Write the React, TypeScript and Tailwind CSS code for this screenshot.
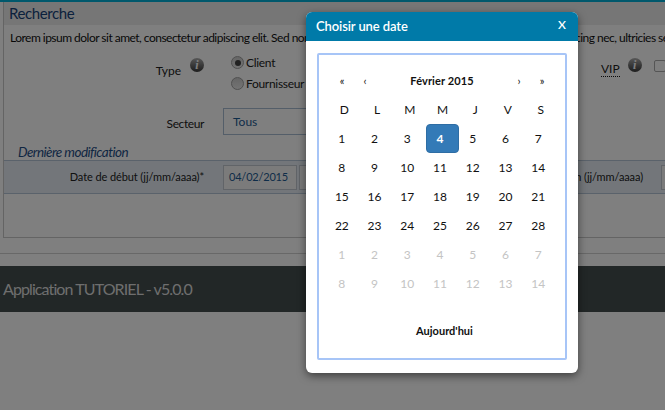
const week = ["D", "L", "M", "M", "J", "V", "S"];
const days = Array.from({ length: 28 }, (_, i) => i + 1);
const next = [1, 2, 3, 4, 5, 6, 7, 8, 9, 10, 11, 12, 13, 14];

function Info() {
  return (
    <span className="flex h-[14px] w-[14px] items-center justify-center rounded-full bg-gradient-to-b from-[#b0b0b0] to-[#3c3c3c] font-['Liberation_Serif',serif] text-[12px] font-bold italic leading-none text-white">
      i
    </span>
  );
}

function Radio({ checked }: { checked?: boolean }) {
  return (
    <span className="flex h-[13px] w-[13px] shrink-0 items-center justify-center rounded-full border border-[#a0a0a0] bg-gradient-to-b from-[#cccccc] to-[#e8e8e8]">
      {checked && <span className="h-[6px] w-[6px] rounded-full bg-[#444444]" />}
    </span>
  );
}

export default function App() {
  return (
    <div className="relative h-[410px] w-[665px] overflow-hidden bg-white font-['Lato',sans-serif] text-[12px] text-[#222222]">
      <div className="h-[2px] bg-[#00b0d8]" />
      <div className="ml-[3px] h-[236px] w-[720px] border border-t-0 border-[#c8c8c8]">
        <div className="flex h-[23px] items-center bg-[#ececec] pl-[5px] text-[15px] leading-none tracking-[-0.4px] text-[#16427a]">
          Recherche
        </div>
        <div className="flex h-[25px] items-center overflow-hidden whitespace-nowrap pl-[6px] text-[12px] tracking-[-0.52px] text-[#111111]">
          Lorem ipsum dolor sit amet, consectetur adipiscing elit. Sed non risus Suspendisse lectus tortor dignissim sit amet, adipiscing nec, ultricies sed, dolor.
        </div>
        <div className="flex h-[57px] shrink-0">
          <div className="flex w-[177px] shrink-0 justify-end pt-[12px]">Type</div>
          <div className="ml-[9px] shrink-0 pt-[8px]"><Info /></div>
          <div className="ml-[27px] flex w-[90px] shrink-0 flex-col gap-[6px] pt-[5px] tracking-[-0.3px]">
            <label className="flex h-[15px] items-center gap-[2px]"><Radio checked />Client</label>
            <label className="flex h-[15px] items-center gap-[2px]"><Radio />Fournisseur</label>
          </div>
          <div className="ml-[280px] shrink-0 pt-[10px]">
            <span className="border-b border-dotted border-[#111111] text-[12px] leading-none">VIP</span>
          </div>
          <div className="ml-[8px] shrink-0 pt-[8px]"><Info /></div>
          <div className="ml-[12px] shrink-0 pt-[10px]">
            <span className="block h-[12px] w-[12px] rounded-[2px] border border-[#aaaaaa] bg-white" />
          </div>
        </div>
        <div className="flex h-[29px] items-center">
          <div className="w-[200px] shrink-0 pt-[5px] text-right tracking-[-0.4px]">Secteur</div>
          <div className="ml-[19px] flex h-[27px] w-[300px] shrink-0 items-center border border-[#a9bdd2] bg-white pl-[9px] text-[#1d5a92]">Tous</div>
        </div>
        <div className="flex h-[24px] items-end pb-[1px] pl-[14px] text-[13.5px] italic leading-none tracking-[-0.55px] text-[#1f4e86]">Dernière modification</div>
        <div className="flex h-[34px] items-center border-y border-[#b4c4d6] bg-[#e6edf5]">
          <div className="w-[200px] shrink-0 pt-[1px] text-right text-[11px] tracking-[-0.1px]">Date de début (jj/mm/aaaa)*</div>
          <div className="ml-[19px] flex h-[25px] w-[74px] shrink-0 items-center border border-[#c3c9d0] bg-[#f6f6f6] pl-[5px] pt-[1px] text-[11px] tracking-[-0.2px] text-[#1d5a92]">04/02/2015</div>
          <div className="ml-[2px] h-[25px] w-[20px] shrink-0 border border-[#c3c9d0] bg-[#f6f6f6]" />
          <div className="w-[324px] shrink-0 pt-[1px] text-right text-[11px] tracking-[-0.1px]">Date de fin (jj/mm/aaaa)</div>
          <div className="ml-[18px] h-[25px] w-[40px] shrink-0 border border-[#c3c9d0] bg-[#f6f6f6]" />
        </div>
      </div>
      <div className="mt-[15px] h-[13px] border-t border-[#d0d0d0]" />
      <div className="flex h-[46px] items-center bg-[#444e4e] pl-[3px] text-[16px] tracking-[-0.9px] text-[#dddddd]">
        Application TUTORIEL - v5.0.0
      </div>

      <div className="absolute inset-0 bg-black/50" />

      <div className="absolute left-[306px] top-[12px] h-[361px] w-[272px] overflow-hidden rounded-[6px] bg-white shadow-[0_3px_9px_rgba(0,0,0,0.5)]">
        <div className="flex h-[29px] items-center justify-between bg-[#007aa8] pl-[10px] pr-[12px] text-[13px] font-semibold text-white">
          <span className="tracking-[-0.1px]">Choisir une date</span>
          <span className="pb-[3px] text-[12px]">X</span>
        </div>
        <div className="mx-[11px] mt-[12px] h-[307px] w-[250px] rounded-[2px] border-2 border-[#a7c5f7] px-[9px] pt-[12px] text-[#111111]">
          <div className="flex h-[28px] w-[229px] items-center text-[11px]">
            <span className="ml-[10px] w-[8px] text-center">«</span>
            <span className="ml-[15px] w-[8px] text-center">‹</span>
            <span className="ml-[41px] w-[64px] text-center font-bold tracking-[0.1px]">Février 2015</span>
            <span className="ml-[41px] w-[8px] text-center">›</span>
            <span className="ml-[15px] w-[8px] text-center">»</span>
          </div>
          <div className="grid w-[229px] grid-cols-7 text-center">
            {week.map((d, i) => (
              <span key={i} className="flex h-[29px] items-center justify-center text-[12px]">{d}</span>
            ))}
            {days.map((d) => (
              <span
                key={d}
                className={
                  d === 4
                    ? "flex h-[29px] items-center justify-center rounded-[4px] border border-[#2e6da4] bg-[#337ab7] pr-[5px] text-[12px] font-bold text-white"
                    : "flex h-[29px] items-center justify-center pr-[5px] text-[12px]"
                }
              >
                {d}
              </span>
            ))}
            {next.map((d) => (
              <span key={`n${d}`} className="flex h-[29px] items-center justify-center pr-[5px] text-[12px] text-[#c4c4c4]">{d}</span>
            ))}
          </div>
          <div className="mt-[25px] w-[229px] pl-[4px] text-center text-[11px] font-bold">Aujourd'hui</div>
        </div>
      </div>
    </div>
  );
}
